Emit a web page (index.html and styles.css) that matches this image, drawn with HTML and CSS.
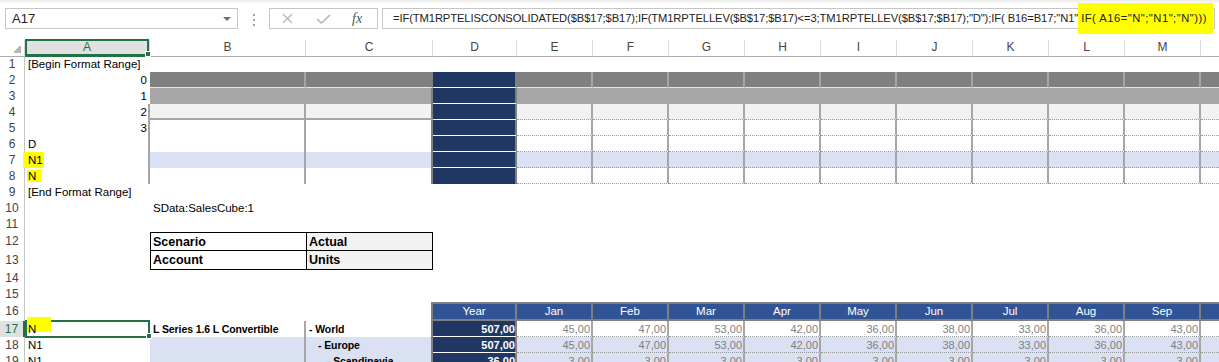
FILE: index.html
```html
<!DOCTYPE html>
<html>
<head>
    <title>TM1 Active Form - Format Range</title>
    <link rel="stylesheet" href="styles.css">
</head>
<body>
    <div class="formula-bar">
        <div class="name-box">
            <span>A17</span>
            <span class="caret"></span>
        </div>
        <div class="grip"><i></i><i></i><i></i></div>
        <div class="fx-buttons">
            <svg class="icon-cancel" width="11" height="11" viewBox="0 0 11 11"><path d="M1 1L10 10M10 1L1 10" stroke="#b5b5b5" stroke-width="1.3" fill="none"/></svg>
            <svg class="icon-enter" width="15" height="10" viewBox="0 0 15 10"><path d="M1 5L5.5 9L14 1" stroke="#b5b5b5" stroke-width="1.6" fill="none"/></svg>
            <span class="fx">fx</span>
        </div>
        <div class="formula">=IF(TM1RPTELISCONSOLIDATED($B$17;$B17);IF(TM1RPTELLEV($B$17;$B17)&lt;=3;TM1RPTELLEV($B$17;$B17);"D");IF( B16=B17;"N1";<mark class="hl-formula">IF( A16="N";"N1";"N")))</mark></div>
    </div>

    <div class="sheet">
        <div class="row heads">
            <div class="corner"></div>
            <div class="sel">A</div><div>B</div><div>C</div><div>D</div><div>E</div><div>F</div><div>G</div>
            <div>H</div><div>I</div><div>J</div><div>K</div><div>L</div><div>M</div><div>N</div>
        </div>

        <div class="row">
            <div class="rh">1</div>
            <div>[Begin Format Range]</div>
            <div></div><div></div><div></div>
            <div></div><div></div><div></div><div></div><div></div><div></div><div></div><div></div><div></div><div></div>
        </div>

        <div class="row">
            <div class="rh">2</div>
            <div class="r">0</div>
            <div class="g2 vl lb"></div>
            <div class="g2 dl lb"></div>
            <div class="navy dl wb"></div>
            <div class="g2 vl lb"></div><div class="g2 vl lb"></div><div class="g2 vl lb"></div><div class="g2 vl lb"></div><div class="g2 vl lb"></div>
            <div class="g2 vl lb"></div><div class="g2 vl lb"></div><div class="g2 vl lb"></div><div class="g2 vl lb"></div><div class="g2 vl lb"></div>
        </div>

        <div class="row">
            <div class="rh">3</div>
            <div class="r">1</div>
            <div class="g3"></div>
            <div class="g3 dl"></div>
            <div class="navy dl wb"></div>
            <div class="g3"></div><div class="g3"></div><div class="g3"></div><div class="g3"></div><div class="g3"></div>
            <div class="g3"></div><div class="g3"></div><div class="g3"></div><div class="g3"></div><div class="g3"></div>
        </div>

        <div class="row">
            <div class="rh">4</div>
            <div class="r al">2</div>
            <div class="g4 vl sb"></div>
            <div class="g4 dl sb"></div>
            <div class="navy dl wb"></div>
            <div class="g4 vl db"></div><div class="g4 vl db"></div><div class="g4 vl db"></div><div class="g4 vl db"></div><div class="g4 vl db"></div>
            <div class="g4 vl db"></div><div class="g4 vl db"></div><div class="g4 vl db"></div><div class="g4 vl db"></div><div class="g4 vl db"></div>
        </div>

        <div class="row">
            <div class="rh">5</div>
            <div class="r al">3</div>
            <div class="vl"></div>
            <div class="dl"></div>
            <div class="navy dl wb"></div>
            <div class="vl db"></div><div class="vl db"></div><div class="vl db"></div><div class="vl db"></div><div class="vl db"></div>
            <div class="vl db"></div><div class="vl db"></div><div class="vl db"></div><div class="vl db"></div><div class="vl db"></div>
        </div>

        <div class="row">
            <div class="rh">6</div>
            <div class="al">D</div>
            <div class="vl"></div>
            <div class="dl"></div>
            <div class="navy dl wb"></div>
            <div class="vl db"></div><div class="vl db"></div><div class="vl db"></div><div class="vl db"></div><div class="vl db"></div>
            <div class="vl db"></div><div class="vl db"></div><div class="vl db"></div><div class="vl db"></div><div class="vl db"></div>
        </div>

        <div class="row">
            <div class="rh">7</div>
            <div class="al ov"><mark class="hl hl-7">N1</mark></div>
            <div class="blue vl"></div>
            <div class="blue dl"></div>
            <div class="navy dl wb"></div>
            <div class="blue vl db"></div><div class="blue vl db"></div><div class="blue vl db"></div><div class="blue vl db"></div><div class="blue vl db"></div>
            <div class="blue vl db"></div><div class="blue vl db"></div><div class="blue vl db"></div><div class="blue vl db"></div><div class="blue vl db"></div>
        </div>

        <div class="row">
            <div class="rh">8</div>
            <div class="al ov"><mark class="hl hl-8">N</mark></div>
            <div class="vl"></div>
            <div class="dl"></div>
            <div class="navy dl"></div>
            <div class="vl db"></div><div class="vl db"></div><div class="vl db"></div><div class="vl db"></div><div class="vl db"></div>
            <div class="vl db"></div><div class="vl db"></div><div class="vl db"></div><div class="vl db"></div><div class="vl db"></div>
        </div>

        <div class="row">
            <div class="rh">9</div>
            <div>[End Format Range]</div>
            <div></div><div></div><div></div>
            <div></div><div></div><div></div><div></div><div></div><div></div><div></div><div></div><div></div><div></div>
        </div>

        <div class="row">
            <div class="rh">10</div>
            <div></div>
            <div>SData:SalesCube:1</div>
            <div></div><div></div>
            <div></div><div></div><div></div><div></div><div></div><div></div><div></div><div></div><div></div><div></div>
        </div>

        <div class="row">
            <div class="rh">11</div>
            <div></div><div></div><div></div><div></div>
            <div></div><div></div><div></div><div></div><div></div><div></div><div></div><div></div><div></div><div></div>
        </div>

        <div class="row tall">
            <div class="rh">12</div>
            <div></div>
            <div class="kv top">Scenario</div>
            <div class="kv val top">Actual</div>
            <div></div>
            <div></div><div></div><div></div><div></div><div></div><div></div><div></div><div></div><div></div><div></div>
        </div>

        <div class="row tall">
            <div class="rh">13</div>
            <div></div>
            <div class="kv">Account</div>
            <div class="kv val">Units</div>
            <div></div>
            <div></div><div></div><div></div><div></div><div></div><div></div><div></div><div></div><div></div><div></div>
        </div>

        <div class="row">
            <div class="rh">14</div>
            <div></div><div></div><div></div><div></div>
            <div></div><div></div><div></div><div></div><div></div><div></div><div></div><div></div><div></div><div></div>
        </div>

        <div class="row">
            <div class="rh">15</div>
            <div></div><div></div><div></div><div></div>
            <div></div><div></div><div></div><div></div><div></div><div></div><div></div><div></div><div></div><div></div>
        </div>

        <div class="row tall">
            <div class="rh">16</div>
            <div></div>
            <div></div>
            <div class="dl"></div>
            <div class="hd">Year</div>
            <div class="hd">Jan</div><div class="hd">Feb</div><div class="hd">Mar</div><div class="hd">Apr</div><div class="hd">May</div>
            <div class="hd">Jun</div><div class="hd">Jul</div><div class="hd">Aug</div><div class="hd">Sep</div><div class="hd">Oct</div>
        </div>

        <div class="row">
            <div class="rh rsel">17</div>
            <div class="sel"><mark class="hl hl-17">N</mark></div>
            <div class="bold vl">L Series 1.6 L Convertible</div>
            <div class="bold dl">- World</div>
            <div class="navy dl wb dv">507,00</div>
            <div class="num vl db">45,00</div><div class="num vl db">47,00</div><div class="num vl db">53,00</div><div class="num vl db">42,00</div><div class="num vl db">36,00</div>
            <div class="num vl db">38,00</div><div class="num vl db">33,00</div><div class="num vl db">36,00</div><div class="num vl db">43,00</div><div class="num vl db">38,00</div>
        </div>

        <div class="row">
            <div class="rh">18</div>
            <div>N1</div>
            <div class="blue vl"></div>
            <div class="blue bold dl lv1">- Europe</div>
            <div class="navy dl wb dv">507,00</div>
            <div class="blue num vl db">45,00</div><div class="blue num vl db">47,00</div><div class="blue num vl db">53,00</div><div class="blue num vl db">42,00</div><div class="blue num vl db">36,00</div>
            <div class="blue num vl db">38,00</div><div class="blue num vl db">33,00</div><div class="blue num vl db">36,00</div><div class="blue num vl db">43,00</div><div class="blue num vl db">38,00</div>
        </div>

        <div class="row">
            <div class="rh">19</div>
            <div>N1</div>
            <div class="blue vl"></div>
            <div class="blue bold dl lv2">- Scandinavia</div>
            <div class="navy dl wb dv">36,00</div>
            <div class="blue num vl db">3,00</div><div class="blue num vl db">3,00</div><div class="blue num vl db">3,00</div><div class="blue num vl db">3,00</div><div class="blue num vl db">3,00</div>
            <div class="blue num vl db">3,00</div><div class="blue num vl db">3,00</div><div class="blue num vl db">3,00</div><div class="blue num vl db">3,00</div><div class="blue num vl db">3,00</div>
        </div>
    </div>
</body>
</html>
```

FILE: styles.css
```css
body {
    margin: 0;
    width: 1219px;
    height: 362px;
    overflow: hidden;
    background: #fff;
    font-family: "Liberation Sans", Arial, sans-serif;
    color: #000;
}

/* formula bar */

.formula-bar {
    display: flex;
    align-items: flex-start;
    height: 40px;
    box-sizing: border-box;
    padding: 8px 4px 0 5px;
    background: linear-gradient(#ebebeb, #fff 4px);
}

.name-box {
    width: 233px;
    height: 21px;
    box-sizing: border-box;
    border: 1px solid #c6c6c6;
    background: #fff;
    display: flex;
    align-items: center;
    justify-content: space-between;
    padding: 0 6px;
    font-size: 13px;
    color: #222;
}

.caret {
    width: 0;
    height: 0;
    border-left: 4px solid transparent;
    border-right: 4px solid transparent;
    border-top: 4px solid #6e6e6e;
}

.grip {
    display: flex;
    flex-direction: column;
    gap: 3px;
    margin: 6px 0 0 15px;
}

.grip i {
    display: block;
    width: 2px;
    height: 2px;
    background: #a6a6a6;
}

.fx-buttons {
    display: flex;
    align-items: center;
    width: 109px;
    height: 21px;
    box-sizing: border-box;
    border: 1px solid #c6c6c6;
    margin-left: 14px;
    padding-left: 12px;
}

.icon-enter {
    margin-left: 23px;
}

.fx {
    margin-left: 21px;
    font-family: "Liberation Serif", serif;
    font-style: italic;
    font-size: 14px;
    color: #555;
}

.formula {
    flex: 1;
    height: 21px;
    box-sizing: border-box;
    border: 1px solid #c6c6c6;
    margin-left: 4px;
    padding-left: 10px;
    font-size: 11.2px;
    line-height: 19px;
    letter-spacing: -0.1px;
    color: #222;
    white-space: nowrap;
}

.hl-formula {
    background: #ffff00;
    color: inherit;
    letter-spacing: 0.5px;
    padding: 9px 6px 10px 3px;
    margin-left: -3px;
}

/* sheet grid */

.sheet {
    width: 1277px;
}

.row {
    display: grid;
    grid-template-columns: 25px 125px 156px 127px 84px repeat(10, 76px);
    height: 16px;
}

.row.tall {
    height: 19px;
}

.row > div {
    box-sizing: border-box;
    overflow: hidden;
    white-space: nowrap;
    padding: 0 3px;
    font-size: 11.5px;
    line-height: 16px;
}

.row.tall > div {
    line-height: 18px;
}

.heads > div {
    padding: 0;
    font-size: 12px;
    line-height: 15px;
    color: #444;
    text-align: center;
    border-right: 1px solid #dadada;
    border-bottom: 1px solid #ababab;
}

.heads .sel {
    background: #e1e1e1;
    color: #217346;
    border-bottom: 2px solid #217346;
}

.heads .corner {
    background: linear-gradient(135deg, transparent 50%, #b8b8b8 50%) no-repeat right 3px bottom 3px / 8px 8px;
}

.row .rh {
    padding: 0;
    text-align: center;
    color: #444;
    font-size: 12px;
    border-right: 1px solid #c6c6c6;
}

.row .rsel {
    background: #e1e1e1;
    color: #217346;
    border-right: 2px solid #217346;
}

.r {
    text-align: right;
}

.al {
    border-right: 2px solid #a6a6a6;
}

.row .al {
    padding-right: 1px;
}

.row .ov {
    overflow: visible;
}

/* fills and borders */

.g2 { background: #808080; }
.g3 { background: #a6a6a6; }
.g4 { background: #f2f2f2; }
.blue { background: #d9e1f2; }
.navy { background: #203764; }

.vl { border-right: 2px solid #a6a6a6; }
.dl { border-right: 2px solid #808080; }
.lb { border-bottom: 1px solid #e6e6e6; }
.wb { border-bottom: 1px solid #fff; }
.sb { border-bottom: 2px solid #a6a6a6; }
.db { border-bottom: 1px dotted #999; }

/* highlighter marks */

.hl {
    background: #ffff00;
    color: inherit;
    position: relative;
    z-index: 2;
}

.hl-7 {
    padding: 2px 1px 2px 5px;
    margin-left: -5px;
}

.hl-8 {
    padding: 0 6px 0 1px;
    margin-left: -1px;
}

.hl-17 {
    padding: 6px 15px 0 1px;
    margin-left: -1px;
    background: linear-gradient(#ffff00 calc(100% - 3px), transparent 0);
}

/* selected cell */

.row .sel {
    position: relative;
    z-index: 3;
    overflow: visible;
}

.row .sel::after {
    content: "";
    position: absolute;
    top: -1px;
    bottom: -1px;
    left: 0;
    right: 0;
    border: 2px solid #217346;
}

.row .sel::before {
    content: "";
    position: absolute;
    right: -2px;
    bottom: -2px;
    width: 4px;
    height: 4px;
    background: #217346;
    border: 1px solid #fff;
    z-index: 4;
}

/* header table */

.kv {
    font-weight: bold;
    border-left: 1px solid #000;
    border-bottom: 1px solid #000;
}

.row .kv {
    padding-left: 2px;
    font-size: 12.5px;
}

.top {
    border-top: 1px solid #000;
}

.kv.val {
    background: #f2f2f2;
    border-right: 1px solid #000;
}

/* report */

.hd {
    background: #305496;
    color: #fff;
    text-align: center;
    border-top: 2px solid #808080;
    border-bottom: 2px solid #808080;
    border-right: 2px solid #808080;
}

.row.tall > .hd {
    line-height: 15px;
}

.row .bold {
    font-weight: bold;
    font-size: 10.5px;
    letter-spacing: -0.1px;
}

.row .lv1 {
    padding-left: 12px;
}

.row .lv2 {
    padding-left: 21px;
}

.row .dv {
    color: #fff;
    font-weight: bold;
    text-align: right;
    font-size: 11px;
    padding-right: 0;
}

.row .num {
    color: #7f7f7f;
    text-align: right;
    font-size: 11px;
    padding-right: 1px;
}
```
